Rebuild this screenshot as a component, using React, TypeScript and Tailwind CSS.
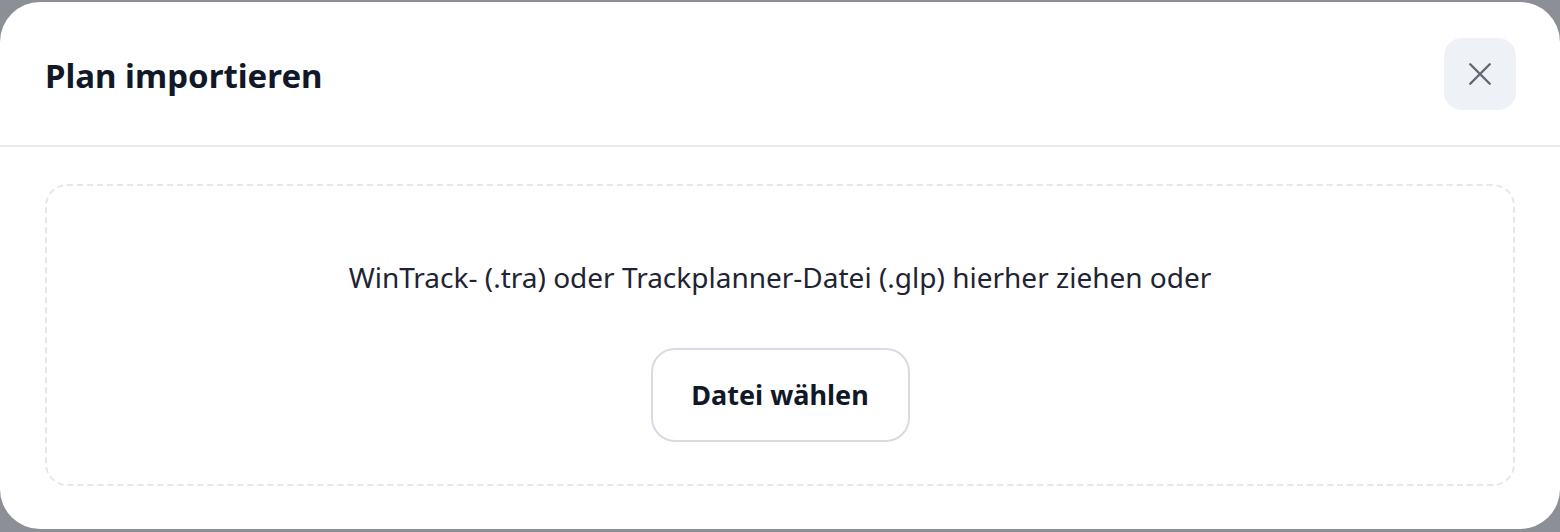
import React from "react";

const CloseIcon = () => (
  <svg width="26" height="26" viewBox="0 0 24 24" fill="none" stroke="currentColor" strokeWidth="2.2" strokeLinecap="round">
    <path d="M3 3 L21 21 M21 3 L3 21" />
  </svg>
);

const App = () => {
  return (
    <div
      className="h-[532px] w-[1560px] bg-[#8d8f96] pt-[2px] pb-[3px]"
      style={{ fontFamily: '"Noto Sans", "Open Sans", sans-serif' }}
    >
      <div className="flex h-full w-full flex-col overflow-hidden rounded-[40px] bg-white">
        <div className="flex h-[145px] items-center justify-between border-b-2 border-[#e8eaee] pr-[44px] pl-[45px]">
          <h2 className="pt-[4px] text-[33px] font-bold text-[#111827]">Plan importieren</h2>
          <button className="flex h-[72px] w-[72px] items-center justify-center rounded-[18px] bg-[#eef1f5] text-[#64656f]">
            <CloseIcon />
          </button>
        </div>
        <div className="flex-1 px-[45px] pt-[37px] pb-[43px]">
          <div className="flex h-full flex-col items-center rounded-[22px] border-2 border-dashed border-[#e5e7eb] pt-[70px]">
            <p className="text-[28px] leading-[42px] text-[#1e2433]">
              WinTrack- (.tra) oder Trackplanner-Datei (.glp) hierher ziehen oder
            </p>
            <button className="mt-[50px] h-[94px] w-[259px] rounded-[24px] border-2 border-[#d9dbe3] bg-white text-[27px] font-bold text-[#111827]">
              Datei wählen
            </button>
          </div>
        </div>
      </div>
    </div>
  );
};

export default App;
